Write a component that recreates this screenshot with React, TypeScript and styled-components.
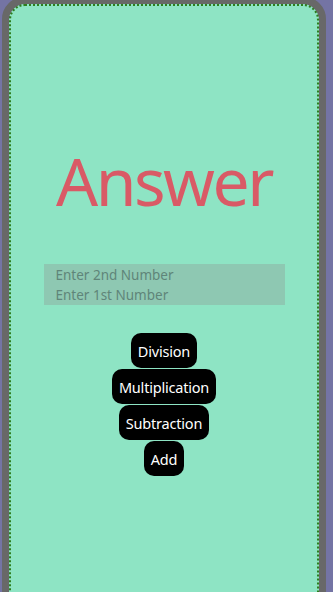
import React from "react";
import styled, { createGlobalStyle } from "styled-components";

const Global = createGlobalStyle`
  html, body {
    margin: 0;
    padding: 0;
    background: #7474a4;
    overflow: hidden;
  }
  * { box-sizing: border-box; }
`;

const Frame = styled.div`
  margin: -3px 0 0 2px;
  width: 324px;
  height: 640px;
  border: 7px solid #686868;
  border-radius: 22px;
  background: #686868;
`;

const Screen = styled.div`
  height: 100%;
  border: 2px dotted #2e7d1e;
  border-radius: 16px;
  background: #8ee4c4;
  display: flex;
  flex-direction: column;
  align-items: center;
  font-family: "Noto Sans", "Open Sans", sans-serif;
`;

const Answer = styled.div`
  margin-top: 134px;
  font-size: 66px;
  line-height: 80px;
  letter-spacing: -2.5px;
  color: #d95a66;
`;

const InputGroup = styled.div`
  margin-top: 44px;
  width: 241px;
  display: flex;
  flex-direction: column;
  background: #8ec8b2;
`;

const NumberInput = styled.input`
  height: 20.5px;
  border: none;
  outline: none;
  background: transparent;
  padding: 1px 0 0 12px;
  font-family: "Noto Sans", sans-serif;
  font-size: 13.5px;
  color: #333;
  &::placeholder {
    color: #5f8579;
  }
`;

const Buttons = styled.div`
  margin-top: 28px;
  display: flex;
  flex-direction: column;
  align-items: center;
  gap: 1px;
`;

const OpButton = styled.button`
  height: 35px;
  padding: 0 7px;
  border: none;
  border-radius: 10px;
  background: #000;
  color: #fff;
  font-family: "Noto Sans", sans-serif;
  font-size: 14.5px;
  letter-spacing: -0.2px;
  cursor: pointer;
`;

export default function App() {
  return (
    <>
      <Global />
      <Frame>
        <Screen>
          <Answer>Answer</Answer>
          <InputGroup>
            <NumberInput placeholder="Enter 2nd Number" />
            <NumberInput placeholder="Enter 1st Number" />
          </InputGroup>
          <Buttons>
            <OpButton>Division</OpButton>
            <OpButton>Multiplication</OpButton>
            <OpButton>Subtraction</OpButton>
            <OpButton>Add</OpButton>
          </Buttons>
        </Screen>
      </Frame>
    </>
  );
}
